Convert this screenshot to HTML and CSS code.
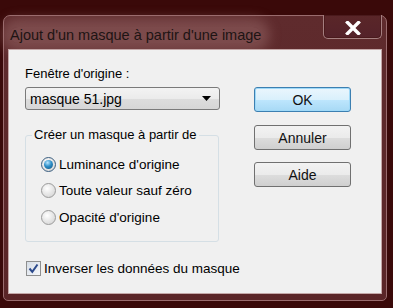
FILE: index.html
```html
<!DOCTYPE html>
<html lang="fr">
<head>
<meta charset="utf-8">
<link rel="stylesheet" href="styles.css">
</head>
<body>
<div class="window">
  <div class="titlebar">
    <span class="title">Ajout d'un masque à partir d'une image</span>
    <div class="close">
      <svg width="16" height="14" viewBox="0 0 16 14"><path d="M2.5 1.5 L13.5 12.5 M13.5 1.5 L2.5 12.5" stroke="#fff" stroke-width="3.4" stroke-linecap="square"/></svg>
    </div>
  </div>
  <div class="client">
    <div class="left">
      <div class="label">Fenêtre d'origine :</div>
      <div class="select">
        <span>masque 51.jpg</span>
        <svg class="arrow" width="9" height="5" viewBox="0 0 9 5"><path d="M0 0 H9 L4.5 5 Z" fill="#000"/></svg>
      </div>
      <fieldset class="group">
        <legend>Créer un masque à partir de</legend>
        <div class="radio-row"><span class="radio checked"></span>Luminance d'origine</div>
        <div class="radio-row"><span class="radio"></span>Toute valeur sauf zéro</div>
        <div class="radio-row"><span class="radio"></span>Opacité d'origine</div>
      </fieldset>
      <div class="check-row">
        <span class="check">
          <svg width="11" height="11" viewBox="0 0 11 11"><path d="M1.5 5.5 L4.3 8.8 L9.5 1.5" stroke="#2c4a8c" stroke-width="2" fill="none"/></svg>
        </span>
        <span>Inverser les données du masque</span>
      </div>
    </div>
    <div class="right">
      <div class="btn default">OK</div>
      <div class="btn">Annuler</div>
      <div class="btn">Aide</div>
    </div>
  </div>
</div>
</body>
</html>
```
FILE: styles.css
```css
html, body { margin: 0; padding: 0; }
body {
  background: #3a0909;
  width: 393px;
  height: 308px;
  overflow: hidden;
  padding-top: 15px;
  box-sizing: border-box;
}
.window {
  margin-left: 3px;
  width: 384px;
  height: 286px;
  box-sizing: border-box;
  border: 1px solid #9a6c6e;
  border-radius: 7px 7px 5px 5px;
  background: linear-gradient(#5f2b2d, #5a2527);
  padding: 0 4px 6px 4px;
  display: flex;
  flex-direction: column;
}
.titlebar {
  height: 33px;
  display: flex;
  align-items: flex-start;
}
.title {
  margin: 11px 0 0 2px;
  font-family: "Liberation Sans", Arial, sans-serif;
  font-size: 14.5px;
  color: #1e1414;
  line-height: 16px;
  background: rgba(160, 112, 114, 0.45);
  box-shadow: 0 0 12px 9px rgba(160, 112, 114, 0.45);
  border-radius: 10px;
}
.close {
  margin-left: auto;
  margin-top: -1px;
  width: 59px;
  height: 24px;
  box-sizing: border-box;
  border: 1px solid #a57f80;
  border-top: none;
  border-radius: 0 0 5px 5px;
  box-shadow: inset 0 0 0 1px #4a1a1c;
  background: linear-gradient(#5a2628, #54222a);
  display: flex;
  align-items: center;
  justify-content: center;
  padding-top: 2px;
}
.client {
  flex: 1;
  background: #f0f0f0;
  border: 1px solid #c4a8a8;
  display: flex;
  padding: 0 30px 0 16px;
  font-family: "Liberation Sans", Arial, sans-serif;
  font-size: 13px;
  color: #000;
}
.left {
  width: 195px;
  display: flex;
  flex-direction: column;
}
.label {
  margin-top: 16px;
  line-height: 16px;
}
.select {
  margin-top: 5px;
  height: 23px;
  box-sizing: border-box;
  border: 1px solid #7a7a7a;
  border-radius: 3px;
  background: linear-gradient(#f3f3f3 0%, #ebebeb 50%, #dddddd 51%, #d6d6d6 100%);
  display: flex;
  align-items: center;
  padding: 0 8px 0 4px;
  font-size: 14px;
}
.select .arrow { margin-left: auto; }
.group {
  margin: 17px 0 0 0;
  padding: 8px 0 10px 15px;
  width: 194px;
  box-sizing: border-box;
  border: 1px solid #d5dfe5;
  border-radius: 3px;
}
.group legend {
  padding: 0 2px;
  margin-left: -9px;
  line-height: 16px;
}
.radio-row {
  height: 26.5px;
  display: flex;
  align-items: center;
  gap: 3px;
  font-size: 13.5px;
}
.radio {
  width: 15px;
  height: 15px;
  box-sizing: border-box;
  border-radius: 50%;
  border: 1px solid #9a9a9a;
  background: radial-gradient(circle at 40% 35%, #ffffff 0%, #e6e6e6 50%, #cfcfcf 100%);
  position: relative;
}
.radio.checked {
  border-color: #3a5e80;
}
.radio.checked::after {
  content: "";
  position: absolute;
  left: 2px;
  top: 2px;
  width: 9px;
  height: 9px;
  border-radius: 50%;
  background: radial-gradient(circle at 40% 30%, #b8e6ff 0%, #2e8fc8 45%, #0d4f7c 100%);
}
.check-row {
  margin-top: 19px;
  display: flex;
  align-items: center;
  gap: 3px;
  line-height: 16px;
  margin-left: 1px;
  white-space: nowrap;
  font-size: 13.5px;
}
.check {
  flex: none;
  width: 15px;
  height: 15px;
  box-sizing: border-box;
  border: 1px solid #8e8f8f;
  background: linear-gradient(135deg, #d6dde6, #f6f8fb);
  display: flex;
  align-items: center;
  justify-content: center;
}
.right {
  margin-left: auto;
  width: 97px;
  display: flex;
  flex-direction: column;
  padding-top: 37px;
}
.btn {
  height: 25px;
  box-sizing: border-box;
  border: 1px solid #707070;
  border-radius: 3px;
  background: linear-gradient(#f2f2f2 0%, #ebebeb 50%, #dddddd 51%, #cfcfcf 100%);
  display: flex;
  align-items: center;
  justify-content: center;
  margin-bottom: 12px;
  font-size: 14px;
  color: #111;
}
.btn.default {
  border-color: #3c7fb1;
  background: linear-gradient(#eaf6fd 0%, #d9f0fc 50%, #bee6fd 51%, #a7d9f5 100%);
  box-shadow: inset 0 0 0 1px #9fd9f8;
  margin-bottom: 13px;
}
```
